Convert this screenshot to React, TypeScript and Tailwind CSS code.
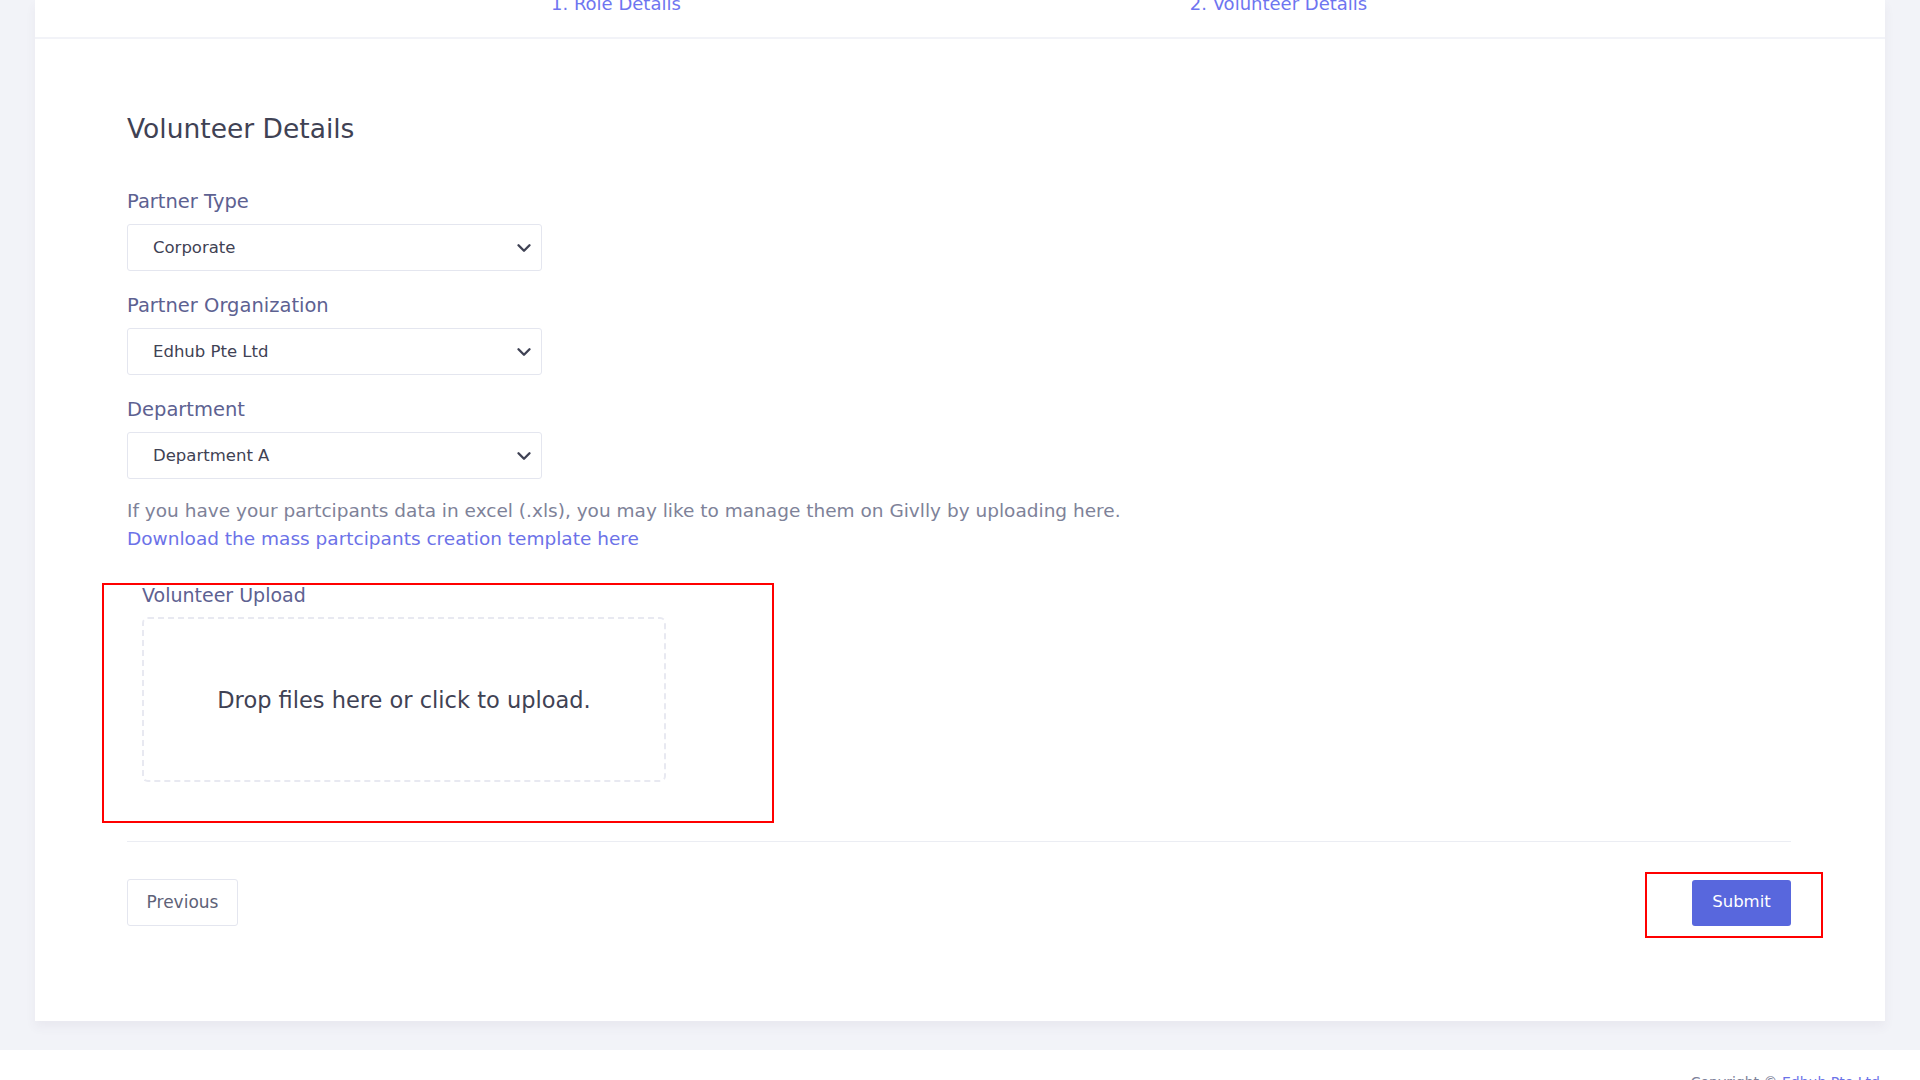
import { ChevronDown } from "lucide-react";

const fields = [
  { label: "Partner Type", value: "Corporate" },
  { label: "Partner Organization", value: "Edhub Pte Ltd" },
  { label: "Department", value: "Department A" },
];

function SelectField({ label, value }: { label: string; value: string }) {
  return (
    <div className="flex flex-col">
      <label className="text-[19.5px] leading-6 text-[#5d6191]">{label}</label>
      <div className="mt-[10px] w-[415px] h-[47px] border border-[#e4e6ef] rounded-[3px] flex items-center justify-between pl-[25px] pr-[6px]">
        <span className="text-[16.5px] text-[#3f4254] pt-[2px]">{value}</span>
        <ChevronDown className="w-[22px] h-[22px] text-[#3f4254]" strokeWidth={2.6} />
      </div>
    </div>
  );
}

export default function App() {
  return (
    <div className="min-h-screen bg-white font-['DejaVu_Sans',sans-serif]">
      <div className="bg-[#f2f3f8] px-[35px] pb-[29px]">
        <div className="bg-white shadow-[0_6px_10px_rgba(82,63,105,0.06)]">
          {/* steps */}
          <div className="h-[39px] border-b-2 border-[#f2f3f8] overflow-hidden">
            <div className="flex gap-[509px] pl-[516px] -mt-[8px] text-[18px] leading-6 text-[#6e75f0]">
              <span>1. Role Details</span>
              <span>2. Volunteer Details</span>
            </div>
          </div>

          <div className="pl-[92px] pr-[94px] pt-[74px] pb-[95px]">
            <h2 className="text-[26.5px] leading-8 text-[#3f4254]">Volunteer Details</h2>

            <div className="mt-[45px] flex flex-col gap-[23px]">
              {fields.map((f) => (
                <SelectField key={f.label} label={f.label} value={f.value} />
              ))}
            </div>

            <div className="mt-[18px] text-[18.5px] leading-7">
              <p className="text-[#7e8299]">
                If you have your partcipants data in excel (.xls), you may like to manage them on Givlly by uploading here.
              </p>
              <a className="text-[#6c72e8] cursor-pointer">Download the mass partcipants creation template here</a>
            </div>

            {/* upload */}
            <div className="mt-[30px] -ml-[25px] w-[672px] border-2 border-[#ff0000] pl-[38px] pb-[39px]">
              <div className="text-[19px] leading-5 text-[#5d6191]">Volunteer Upload</div>
              <div className="mt-[12px] w-[524px] h-[165px] border-2 border-dashed border-[#e8e9f1] rounded-[6px] flex items-center justify-center">
                <span className="text-[22.5px] text-[#3f4254] pt-[2px]">Drop files here or click to upload.</span>
              </div>
            </div>

            <div className="mt-[18px] h-px bg-[#ebedf3]" />

            <div className="mt-[37px] flex items-center justify-between">
              <button className="w-[111px] h-[47px] border border-[#e4e6ef] rounded-[3px] text-[17px] text-[#5e6278]">
                Previous
              </button>
              <div className="relative">
                <button className="w-[99px] h-[46px] rounded-[3px] bg-[#5867dd] text-white text-[16.5px]">
                  Submit
                </button>
                <div className="absolute -left-[47px] -right-[32px] -top-[8px] -bottom-[12px] border-2 border-[#ff0000] pointer-events-none" />
              </div>
            </div>
          </div>
        </div>
      </div>

      <footer className="flex justify-end pr-[40px] pt-[22px] text-[14px] text-[#7e8299]">
        <span>
          Copyright © <span className="text-[#6c72e8]">Edhub Pte Ltd</span>
        </span>
      </footer>
    </div>
  );
}
